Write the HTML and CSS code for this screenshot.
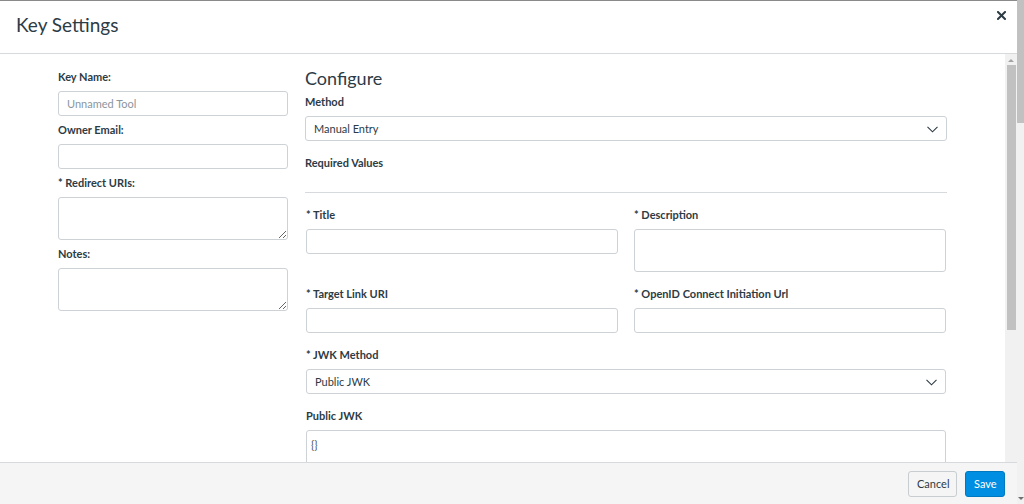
FILE: index.html
```html
<!DOCTYPE html>
<html>
<head>
<meta charset="utf-8">
<link rel="stylesheet" href="styles.css">
</head>
<body>
<div class="window">
  <div class="modal">
    <header class="modal-header">
      <h1 class="modal-title">Key Settings</h1>
      <button class="close" aria-label="Close">
        <svg width="9" height="9" viewBox="0 0 9 9"><path d="M1 1L8 8M8 1L1 8" stroke="#2d3b45" stroke-width="2" stroke-linecap="square"/></svg>
      </button>
    </header>
    <div class="modal-body">
      <div class="content">
        <div class="left-col">
          <div class="field">
            <label class="lbl">Key Name:</label>
            <input class="inp" type="text" placeholder="Unnamed Tool">
          </div>
          <div class="field">
            <label class="lbl">Owner Email:</label>
            <input class="inp" type="text">
          </div>
          <div class="field">
            <label class="lbl">* Redirect URIs:</label>
            <textarea class="ta"></textarea>
          </div>
          <div class="field">
            <label class="lbl">Notes:</label>
            <textarea class="ta"></textarea>
          </div>
        </div>
        <div class="right-col">
          <h2 class="section-title">Configure</h2>
          <div class="group">
            <label class="lbl">Method</label>
            <div class="sel">
              <span>Manual Entry</span>
              <svg width="11" height="7" viewBox="0 0 11 7"><path d="M0.5 0.8L5.5 5.8L10.5 0.8" fill="none" stroke="#2d3b45" stroke-width="1.1"/></svg>
            </div>
          </div>
          <div class="lbl req">Required Values</div>
          <hr class="rule">
          <div class="grid">
            <div class="group">
              <label class="lbl">* Title</label>
              <input class="inp" type="text">
            </div>
            <div class="group">
              <label class="lbl">* Description</label>
              <textarea class="ta desc"></textarea>
            </div>
            <div class="group">
              <label class="lbl">* Target Link URI</label>
              <input class="inp" type="text">
            </div>
            <div class="group">
              <label class="lbl">* OpenID Connect Initiation Url</label>
              <input class="inp" type="text">
            </div>
          </div>
          <div class="group inset">
            <label class="lbl">* JWK Method</label>
            <div class="sel">
              <span>Public JWK</span>
              <svg width="11" height="7" viewBox="0 0 11 7"><path d="M0.5 0.8L5.5 5.8L10.5 0.8" fill="none" stroke="#2d3b45" stroke-width="1.1"/></svg>
            </div>
          </div>
          <div class="group inset">
            <label class="lbl">Public JWK</label>
            <textarea class="ta jwk">{}</textarea>
          </div>
        </div>
      </div>
      <div class="inner-scroll">
        <div class="arrow-up"></div>
        <div class="inner-thumb"></div>
      </div>
    </div>
    <footer class="modal-footer">
      <button class="btn btn-cancel">Cancel</button>
      <button class="btn btn-save">Save</button>
    </footer>
  </div>
  <div class="outer-scroll">
    <div class="outer-thumb"></div>
    <div class="outer-spacer"></div>
    <div class="arrow-down"></div>
  </div>
</div>
</body>
</html>
```

FILE: styles.css
```css
* { box-sizing: border-box; }
html, body {
  margin: 0;
  padding: 0;
  width: 1024px;
  height: 504px;
  overflow: hidden;
  font-family: Lato, "Open Sans", sans-serif;
  color: #2d3b45;
  background: #fff;
}
.window {
  display: flex;
  width: 1024px;
  height: 504px;
}
.modal {
  flex: 1;
  display: flex;
  flex-direction: column;
  border-top: 1px solid #8a8a8a;
  min-width: 0;
}
.modal-header {
  height: 53px;
  flex: none;
  display: flex;
  align-items: flex-start;
  justify-content: space-between;
  border-bottom: 1px solid #d7dadd;
  padding: 0 11px 0 16px;
}
.modal-title {
  margin: 0;
  font-size: 19px;
  font-weight: 400;
  line-height: 24px;
  padding-top: 12px;
}
.close {
  border: 0;
  background: none;
  padding: 0;
  margin-top: 10px;
  width: 9px;
  height: 9px;
  display: flex;
}
.modal-body {
  flex: 1;
  display: flex;
  min-height: 0;
  overflow: hidden;
}
.content {
  flex: 1;
  display: flex;
  gap: 17px;
  padding: 13px 58px 0 58px;
  min-width: 0;
}
.left-col {
  width: 230px;
  flex: none;
  padding-top: 2px;
}
.right-col {
  flex: 1;
  min-width: 0;
}
.lbl {
  display: block;
  font-size: 11px;
  font-weight: 700;
  line-height: 16px;
  margin-bottom: 6px;
  color: #2d3b45;
}
.field { margin-bottom: 6px; }
.inp {
  display: block;
  width: 100%;
  height: 25px;
  border: 1px solid #cdd2d6;
  border-radius: 3px;
  font-family: Lato, sans-serif;
  font-size: 11px;
  padding: 0 8px;
  color: #2d3b45;
  background: #fff;
  outline: none;
}
.inp::placeholder { color: #8b969e; }
.ta {
  display: block;
  width: 100%;
  height: 43px;
  border: 1px solid #cdd2d6;
  border-radius: 3px;
  font-family: Lato, sans-serif;
  font-size: 11px;
  padding: 6px 8px;
  color: #2d3b45;
  background: #fff;
  outline: none;
  resize: vertical;
}
.section-title {
  margin: 0 0 5px;
  font-size: 18px;
  font-weight: 400;
  line-height: 22px;
}
.group { margin-bottom: 14px; }
.inset { padding: 0 1px; }
.sel {
  height: 25px;
  border: 1px solid #cdd2d6;
  border-radius: 3px;
  display: flex;
  align-items: center;
  justify-content: space-between;
  padding: 0 8px 0 8px;
  font-size: 11px;
}
.sel svg { margin-top: 1px; }
.req { margin-bottom: 0; }
.rule {
  border: 0;
  border-top: 1px solid #d7dadd;
  margin: 21px 0 14px;
  height: 0;
}
.grid {
  display: grid;
  grid-template-columns: 1fr 1fr;
  column-gap: 16px;
  padding: 0 1px;
  align-items: start;
}
.grid .group { margin-bottom: 14px; }
.desc { height: 43px; resize: none; }
.jwk { height: 60px; padding: 7px 4px; color: #4a5560; }
.inner-scroll {
  width: 12px;
  flex: none;
  background: #f1f1f1;
  display: flex;
  flex-direction: column;
  align-items: center;
}
.arrow-up {
  width: 0; height: 0;
  margin-top: 5px;
  border-left: 3px solid transparent;
  border-right: 3px solid transparent;
  border-bottom: 3px solid #a3a3a3;
}
.inner-thumb {
  margin-top: 3px;
  width: 9px;
  height: 265px;
  background: #c1c1c1;
}
.modal-footer {
  height: 42px;
  flex: none;
  background: #f5f5f5;
  border-top: 1px solid #d7dadd;
  display: flex;
  align-items: center;
  justify-content: flex-end;
  gap: 8px;
  padding: 0 12px 0 0;
}
.btn {
  height: 26px;
  border-radius: 3px;
  font-family: Lato, sans-serif;
  font-size: 11px;
  padding: 0 8px;
  line-height: 24px;
}
.btn-cancel {
  background: #f5f5f5;
  border: 1px solid #c7cdd1;
  color: #2d3b45;
  width: 49px;
}
.btn-save {
  background: #008ee2;
  border: 1px solid #0079c1;
  color: #fff;
  width: 40px;
}
.outer-scroll {
  width: 7px;
  flex: none;
  background: #f1f1f1;
  display: flex;
  flex-direction: column;
  align-items: center;
}
.outer-thumb {
  width: 7px;
  height: 123px;
  background: #c1c1c1;
}
.outer-spacer { flex: 1; }
.arrow-down {
  width: 0; height: 0;
  margin-bottom: 4px;
  border-left: 3px solid transparent;
  border-right: 3px solid transparent;
  border-top: 3px solid #707070;
}
```
